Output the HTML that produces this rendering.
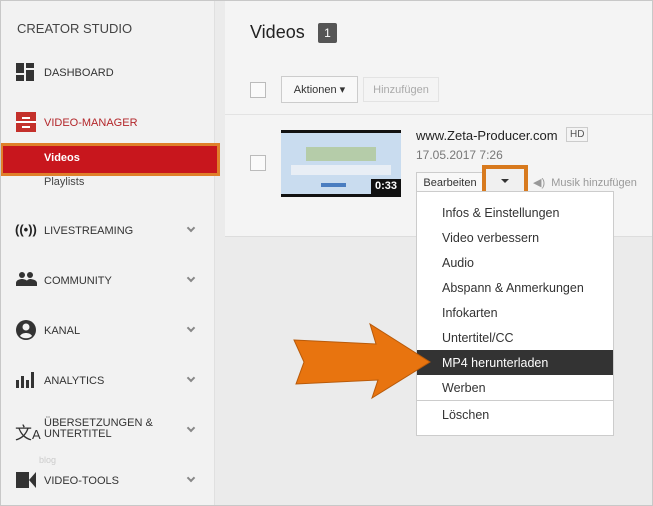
<!DOCTYPE html>
<html><head><meta charset="utf-8"><style>
*{margin:0;padding:0;box-sizing:border-box}
body{width:653px;height:506px;overflow:hidden;background:#ebebeb;font-family:"Liberation Sans",sans-serif;position:relative}
.abs{position:absolute}
#frame{left:0;top:0;width:653px;height:506px;border:1px solid #c8c8c8;z-index:10;pointer-events:none}
#side{left:0;top:0;width:215px;height:506px;background:#f2f2f2;border-right:1px solid #e0e0e0}
.nav{position:absolute;left:44px;font-size:11px;color:#333;text-transform:uppercase}
.chev{position:absolute;left:188px;width:6px;height:6px;border-right:2px solid #888;border-bottom:2px solid #888;transform:rotate(45deg)}
#main{left:225px;top:0;width:428px;height:237px;background:#f4f4f4;border-bottom:1px solid #ddd}
.cb{position:absolute;width:16px;height:16px;border:1px solid #bbb;background:#fafafa}
.btn{position:absolute;border:1px solid #ccc;background:#f8f8f8;font-size:11px;color:#333;padding-top:6px;text-align:center}
.mi{position:absolute;left:0;width:196px;height:25px;font-size:12.5px;color:#333;padding:6px 0 0 25px}
</style></head><body>
<div id="frame" class="abs"></div>
<div id="side" class="abs">
<div class="abs" style="left:17px;top:21px;font-size:13px;color:#444">CREATOR STUDIO</div>
<svg class="abs" style="left:16px;top:63px" width="20" height="18"><rect x="0" y="0" width="8" height="10" fill="#333"/><rect x="0" y="12" width="8" height="6" fill="#333"/><rect x="10" y="0" width="8" height="5" fill="#333"/><rect x="10" y="7" width="8" height="11" fill="#333"/></svg>
<div class="nav" style="top:67px">Dashboard</div>
<svg class="abs" style="left:16px;top:112px" width="20" height="20"><rect width="20" height="20" fill="#c4302b"/><rect x="6" y="5" width="8" height="2" fill="#fff"/><rect x="0" y="9" width="20" height="2" fill="#fff"/><rect x="6" y="14" width="8" height="2" fill="#fff"/></svg>
<div class="nav" style="top:117px;color:#b3262a">Video-Manager</div>
<div class="abs" style="left:0;top:143px;width:220px;height:33px;border:3px solid #e0802a;background:#c8161d"></div>
<div class="abs" style="left:44px;top:152px;font-size:11px;font-weight:bold;color:#fff">Videos</div>
<div class="abs" style="left:44px;top:176px;font-size:11px;color:#444">Playlists</div>
<div class="abs" style="left:15px;top:222px;font-size:13px;font-weight:bold;color:#222">((•))</div>
<div class="nav" style="top:225px">Livestreaming</div><div class="chev" style="top:225px"></div>
<svg class="abs" style="left:16px;top:272px" width="21" height="14"><circle cx="6" cy="3" r="3" fill="#333"/><circle cx="14" cy="3" r="3" fill="#333"/><path d="M0 14v-3c0-3 4-4 6-4s6 1 6 4v3zM10 14v-3c0-2 2-4 4-4s7 1 7 4v3z" fill="#333"/></svg>
<div class="nav" style="top:275px">Community</div><div class="chev" style="top:275px"></div>
<svg class="abs" style="left:16px;top:320px" width="20" height="20"><circle cx="10" cy="10" r="10" fill="#333"/><circle cx="10" cy="7" r="3.5" fill="#f2f2f2"/><path d="M4 16c2-4 10-4 12 0c-3 3-9 3-12 0z" fill="#f2f2f2"/></svg>
<div class="nav" style="top:325px">Kanal</div><div class="chev" style="top:325px"></div>
<svg class="abs" style="left:16px;top:372px" width="20" height="16"><rect x="0" y="8" width="3" height="8" fill="#333"/><rect x="5" y="4" width="3" height="12" fill="#333"/><rect x="10" y="8" width="3" height="8" fill="#333"/><rect x="15" y="0" width="3" height="16" fill="#333"/></svg>
<div class="nav" style="top:375px">Analytics</div><div class="chev" style="top:375px"></div>
<div class="abs" style="left:15px;top:419px;font-size:17px;color:#333">文<span style="font-size:13px">A</span></div>
<div class="nav" style="top:418px;line-height:11px">Übersetzungen &amp;<br>Untertitel</div><div class="chev" style="top:425px"></div>
<div class="abs" style="left:39px;top:455px;font-size:9px;color:#ccc">blog</div>
<svg class="abs" style="left:16px;top:472px" width="20" height="16"><rect width="13" height="16" fill="#333"/><path d="M20 0v16l-7-8z" fill="#333"/></svg>
<div class="nav" style="top:475px">Video-Tools</div><div class="chev" style="top:475px"></div>
</div>
<div id="main" class="abs">
<div class="abs" style="left:25px;top:22px;font-size:18px;color:#222">Videos</div>
<div class="abs" style="left:93px;top:23px;width:19px;height:20px;background:#555;color:#fff;font-size:12px;text-align:center;padding-top:3px;border-radius:2px">1</div>
<div class="cb" style="left:25px;top:82px"></div>
<div class="btn" style="left:56px;top:76px;width:77px;height:27px">Aktionen ▾</div>
<div class="btn" style="left:138px;top:77px;width:76px;height:25px;color:#aaa;background:#f4f4f4;border-color:#e3e3e3">Hinzufügen</div>
<div class="abs" style="left:0;top:114px;width:428px;height:1px;background:#e3e3e3"></div>
<div class="cb" style="left:25px;top:155px"></div>
<div class="abs" style="left:56px;top:130px;width:120px;height:67px;background:#c9dcef;border-top:3px solid #111;border-bottom:3px solid #111">
<div class="abs" style="left:25px;top:14px;width:70px;height:14px;background:#a9c27a;opacity:.6"></div>
<div class="abs" style="left:10px;top:32px;width:100px;height:10px;background:#e8eef5"></div>
<div class="abs" style="left:40px;top:50px;width:25px;height:4px;background:#4a7dc0"></div>
<div class="abs" style="right:0;bottom:0;width:30px;height:15px;background:#111;color:#fff;font-size:11px;font-weight:bold;text-align:center;padding-top:1px">0:33</div></div>
<div class="abs" style="left:191px;top:128px;font-size:13px;color:#222">www.Zeta-Producer.com</div>
<div class="abs" style="left:341px;top:127px;border:1px solid #ccc;font-size:10px;color:#555;padding:1px 3px">HD</div>
<div class="abs" style="left:191px;top:148px;font-size:12px;color:#777">17.05.2017 7:26</div>
<div class="btn" style="left:191px;top:172px;width:68px;height:22px;padding-top:4px">Bearbeiten</div>
<div class="abs" style="left:257px;top:165px;width:46px;height:33px;border:4px solid #d87a1e;background:#f0f0f0"><div style="margin:10px auto 0;width:0;height:0;border-left:4px solid transparent;border-right:4px solid transparent;border-top:4px solid #333"></div></div>
<div class="abs" style="left:308px;top:176px;font-size:11px;color:#999">◀) &nbsp;Musik hinzufügen</div>
</div>
<div class="abs" style="left:416px;top:191px;width:198px;height:245px;background:#fff;border:1px solid #ccc">
<div class="mi" style="top:8px">Infos &amp; Einstellungen</div>
<div class="mi" style="top:33px">Video verbessern</div>
<div class="mi" style="top:58px">Audio</div>
<div class="mi" style="top:83px">Abspann &amp; Anmerkungen</div>
<div class="mi" style="top:108px">Infokarten</div>
<div class="mi" style="top:133px">Untertitel/CC</div>
<div class="mi" style="top:158px;background:#333;color:#fff">MP4 herunterladen</div>
<div class="mi" style="top:183px">Werben</div>
<div class="abs" style="left:0;top:208px;width:196px;height:1px;background:#ccc"></div>
<div class="mi" style="top:210px">Löschen</div>
</div>
<svg class="abs" style="left:290px;top:322px" width="145" height="80"><path d="M4 18 L86 22 L80 2 L140 40 L82 76 L88 58 L6 62 L14 40 Z" fill="#e8740f" stroke="#b85a0a" stroke-width="1"/></svg>
</body></html>
